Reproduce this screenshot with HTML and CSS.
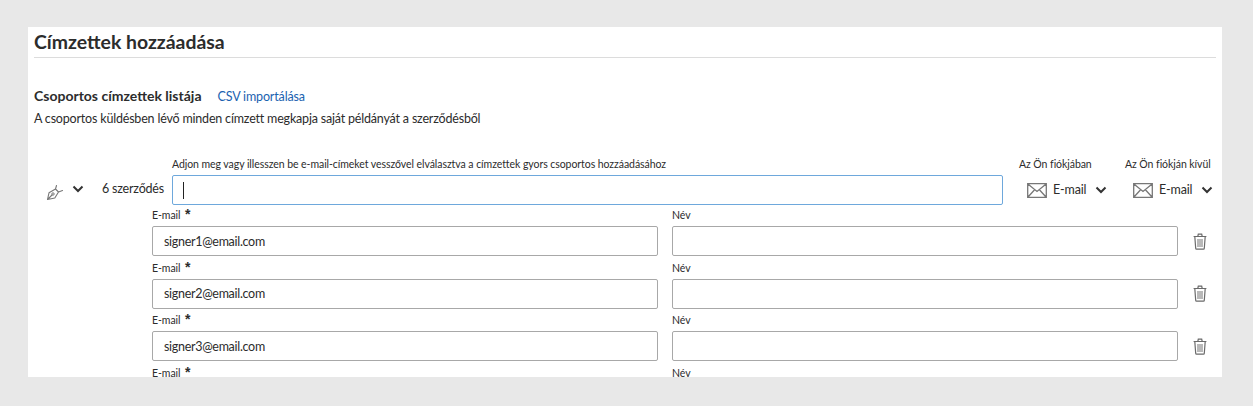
FILE: index.html
```html
<!DOCTYPE html>
<html lang="hu">
<head>
<meta charset="utf-8">
<title>Címzettek hozzáadása</title>
<link rel="stylesheet" href="styles.css">
</head>
<body>
<main class="card">
  <h1 class="title">Címzettek hozzáadása</h1>
  <div class="group-head">
    <h2 class="group-title">Csoportos címzettek listája</h2>
    <a class="csv-link" href="#">CSV importálása</a>
  </div>
  <p class="desc">A csoportos küldésben lévő minden címzett megkapja saját példányát a szerződésből</p>

  <section class="bulk">
    <div class="bulk-spacer"></div>
    <div class="small-label">Adjon meg vagy illesszen be e-mail-címeket vesszővel elválasztva a címzettek gyors csoportos hozzáadásához</div>
    <div class="small-label col-label">Az Ön fiókjában</div>
    <div class="small-label col-label">Az Ön fiókján kívül</div>

    <div class="bulk-left">
      <svg class="icon-pen" width="18" height="18" viewBox="0 0 18 18"><path d="M1.500 16.500 3 9.800 9.500 6 12.500 9 8.800 15 1.500 16.500ZM1.500 16.500 6 12M9.500 6 10.500 2.500M12.500 9 16.500 7.500" fill="none" stroke="#777" stroke-width="1.100" stroke-linejoin="round" stroke-linecap="round"/><circle cx="7" cy="11" r="1.200" fill="none" stroke="#777"/></svg>
      <svg class="chevron chevron-first" width="12" height="8" viewBox="0 0 12 8"><path d="M1.500 1.500 6 6 10.500 1.500" fill="none" stroke="#333" stroke-width="2"/></svg>
      <span class="count">6 szerződés</span>
    </div>
    <div class="bulk-input"><span class="caret"></span></div>
    <div class="method">
      <svg width="20" height="15" viewBox="0 0 20 15"><path d="M.7.700h18.600v13.600H.7zM.9 1 10 8.500 19.100 1M1 14l6.600-7.200M19 14l-6.600-7.200" fill="none" stroke="#777" stroke-width="1.300"/></svg>
      <span class="method-text">E-mail</span>
      <svg class="chevron" width="12" height="8" viewBox="0 0 12 8"><path d="M1.500 1.500 6 6 10.500 1.500" fill="none" stroke="#333" stroke-width="2"/></svg>
    </div>
    <div class="method">
      <svg width="20" height="15" viewBox="0 0 20 15"><path d="M.7.700h18.600v13.600H.7zM.9 1 10 8.500 19.100 1M1 14l6.600-7.200M19 14l-6.600-7.200" fill="none" stroke="#777" stroke-width="1.300"/></svg>
      <span class="method-text">E-mail</span>
      <svg class="chevron" width="12" height="8" viewBox="0 0 12 8"><path d="M1.500 1.500 6 6 10.500 1.500" fill="none" stroke="#333" stroke-width="2"/></svg>
    </div>
  </section>

  <section class="recipients">
    <div class="recipient">
      <div class="field"><label class="small-label">E-mail <span class="req">*</span></label><input class="text-input" value="signer1@email.com"></div>
      <div class="field"><label class="small-label">Név</label><input class="text-input"></div>
      <svg class="trash" width="14" height="17" viewBox="0 0 14 17"><path d="M.6 3.500h12.800M4.800 3.500l.5-2.300h3.400l.5 2.300M1.800 3.500l.9 11.700c0 .5.400.9.900.9h6.800c.5 0 .9-.4.900-.9l.9-11.700" fill="none" stroke="#6a6a6a" stroke-width="1.200"/><path d="M5 6v8M7 6v8M9 6v8" stroke="#8a8a8a" stroke-width="1.200"/></svg>
    </div>
    <div class="recipient">
      <div class="field"><label class="small-label">E-mail <span class="req">*</span></label><input class="text-input" value="signer2@email.com"></div>
      <div class="field"><label class="small-label">Név</label><input class="text-input"></div>
      <svg class="trash" width="14" height="17" viewBox="0 0 14 17"><path d="M.6 3.500h12.800M4.800 3.500l.5-2.300h3.400l.5 2.300M1.800 3.500l.9 11.700c0 .5.400.9.900.9h6.800c.5 0 .9-.4.900-.9l.9-11.700" fill="none" stroke="#6a6a6a" stroke-width="1.200"/><path d="M5 6v8M7 6v8M9 6v8" stroke="#8a8a8a" stroke-width="1.200"/></svg>
    </div>
    <div class="recipient">
      <div class="field"><label class="small-label">E-mail <span class="req">*</span></label><input class="text-input" value="signer3@email.com"></div>
      <div class="field"><label class="small-label">Név</label><input class="text-input"></div>
      <svg class="trash" width="14" height="17" viewBox="0 0 14 17"><path d="M.6 3.500h12.800M4.800 3.500l.5-2.300h3.400l.5 2.300M1.800 3.500l.9 11.700c0 .5.400.9.900.9h6.800c.5 0 .9-.4.900-.9l.9-11.700" fill="none" stroke="#6a6a6a" stroke-width="1.200"/><path d="M5 6v8M7 6v8M9 6v8" stroke="#8a8a8a" stroke-width="1.200"/></svg>
    </div>
    <div class="recipient">
      <div class="field"><label class="small-label">E-mail <span class="req">*</span></label></div>
      <div class="field"><label class="small-label">Név</label></div>
    </div>
  </section>
</main>
</body>
</html>
```
FILE: styles.css
```css
* { box-sizing: border-box; }
html, body { height: 100%; }
body {
  margin: 0;
  background: #e8e8e8;
  font-family: Lato, "Open Sans", sans-serif;
  color: #2c2c2c;
  padding: 27px 31px 0 28px;
  overflow: hidden;
}
.card {
  height: 350px;
  background: #fff;
  padding: 0 6px;
  overflow: hidden;
}
.title {
  margin: 0;
  height: 31px;
  border-bottom: 1px solid #dcdcdc;
  font-size: 19.400px;
  line-height: 30px;
  font-weight: 700;
}
.group-head {
  display: flex;
  align-items: center;
  gap: 16px;
  margin-top: 29px;
  height: 18px;
}
.group-title {
  margin: 0;
  font-size: 14px;
  line-height: 18px;
  font-weight: 700;
}
.csv-link {
  font-size: 12.500px;
  letter-spacing: -0.15px;
  color: #1a62b0;
  text-decoration: none;
}
.desc {
  margin: 5px 0 0;
  font-size: 12.500px;
  letter-spacing: -0.19px;
  line-height: 18px;
}
.bulk {
  display: grid;
  grid-template-columns: 138px 831px 106px 106px;
  grid-template-rows: 16px 30px;
  row-gap: 3px;
  margin-top: 28px;
}
.small-label {
  font-size: 10.500px;
  letter-spacing: -0.06px;
  line-height: 16px;
  white-space: nowrap;
}
.col-label { padding-left: 16px; }
.bulk-left {
  display: flex;
  align-items: center;
}
.icon-pen { margin: 3px 0 0 12px; flex: none; }
.chevron-first { margin: 0 0 3px 8px; flex: none; }
.count {
  margin: 0 0 3px 18px;
  font-size: 12.500px;
  letter-spacing: -0.2px;
}
.bulk-input {
  display: flex;
  align-items: center;
  padding-left: 10px;
  border: 1px solid #6ea8dc;
  border-radius: 2px;
}
.caret {
  width: 1px;
  height: 17px;
  background: #222;
}
.method {
  display: flex;
  align-items: center;
  padding-left: 24px;
}
.method-text {
  margin: 0 9px 1px 6px;
  font-size: 12.500px;
  letter-spacing: -0.15px;
  white-space: nowrap;
}
.method svg { flex: none; }
.method .chevron { margin-bottom: 1px; }
.recipients { margin-top: 1px; padding-left: 118px; }
.recipient {
  display: grid;
  grid-template-columns: 506px 506px 14px;
  column-gap: 14px;
  align-items: end;
  height: 52.5px;
}
.field {
  display: flex;
  flex-direction: column;
  height: 52.5px;
}
.field .small-label { height: 20px; padding-top: 1px; }
.req {
  margin-left: 2px;
  font: 700 14px/10px "Liberation Sans", sans-serif;
}
.text-input {
  display: block;
  width: 100%;
  height: 30px;
  padding: 0 11px;
  border: 1px solid #a8a8a8;
  border-radius: 2px;
  background: #fff;
  color: #2c2c2c;
  font: 12.500px Lato, "Open Sans", sans-serif;
  letter-spacing: -0.3px;
  outline: none;
}
.trash { margin: 0 0 9px 1px; }
```
